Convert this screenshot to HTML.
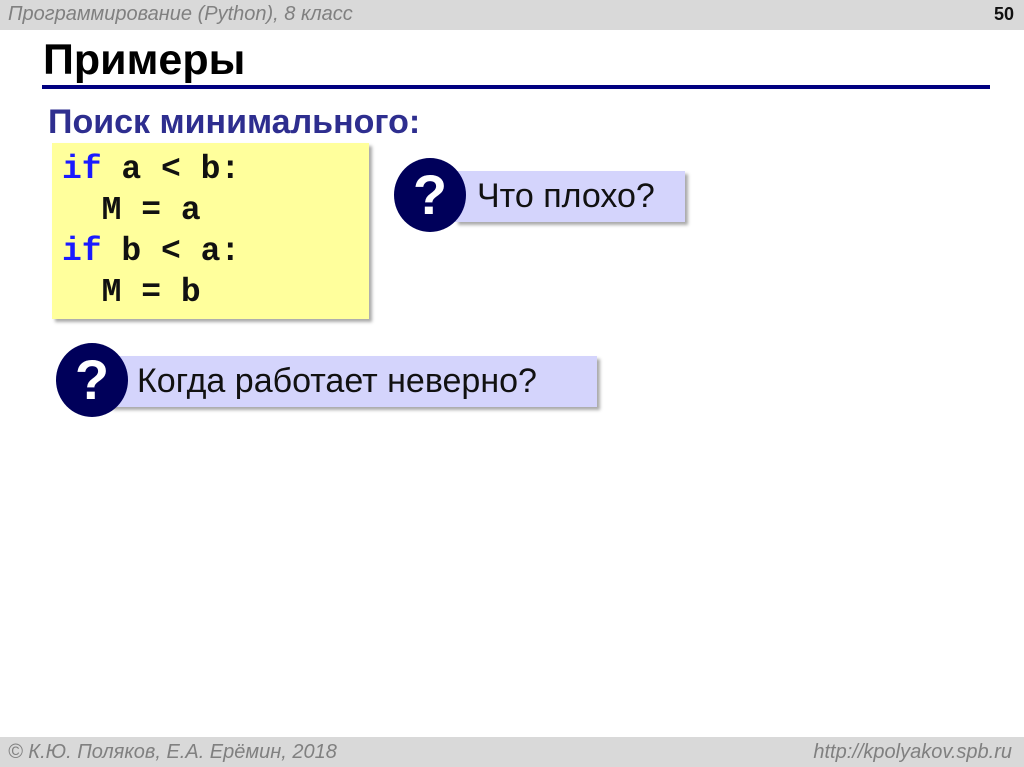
<!DOCTYPE html>
<html><head><meta charset="utf-8"><style>
body{margin:0;width:1024px;height:767px;position:relative;background:#fff;overflow:hidden;font-family:"Liberation Sans",sans-serif}
.a{position:absolute}
.hdr{left:0;top:0;width:1024px;height:30px;background:#d9d9d9}
.ftr{left:0;top:737px;width:1024px;height:30px;background:#d9d9d9}
.gi{color:#808080;font-style:italic;font-size:20px;white-space:nowrap}
.code{left:52px;top:143px;width:317px;height:176px;background:#ffff9c;box-shadow:3px 3px 3px #aaa}
.code div{font-family:"Liberation Mono",monospace;font-size:33px;font-weight:bold;height:41px;line-height:41px;color:#111;white-space:pre}
.kw{color:#1a1aff}
.box{background:#d4d4fc;box-shadow:3px 3px 3px #aaa;color:#111;line-height:51px;height:51px;white-space:nowrap}
.q{border-radius:50%;background:#00005a;width:72px;height:74px;color:#fff;font-weight:bold;font-size:56px;text-align:center;line-height:74px}
</style></head><body>
<div class="a hdr"></div>
<div class="a gi" style="left:8px;top:3px">Программирование (Python), 8 класс</div>
<div class="a" style="right:10px;top:4px;font-weight:bold;font-size:18px;color:#111">50</div>
<div class="a" style="left:43px;top:36px;font-size:43px;font-weight:bold;color:#000;white-space:nowrap">Примеры</div>
<div class="a" style="left:42px;top:85px;width:948px;height:4px;background:#000080"></div>
<div class="a" style="left:48px;top:103px;font-size:34px;font-weight:bold;color:#2e2e8f;white-space:nowrap">Поиск минимального:</div>
<div class="a code"><div style="padding:6px 0 0 10px"><div><span class="kw">if</span> a &lt; b:</div><div>  M = a</div><div><span class="kw">if</span> b &lt; a:</div><div>  M = b</div></div></div>
<div class="a box" style="left:455px;top:171px;width:230px;font-size:34px"><span style="margin-left:22px">Что плохо?</span></div>
<div class="a q" style="left:394px;top:158px">?</div>
<div class="a box" style="left:110px;top:356px;width:487px;font-size:34px"><span style="margin-left:27px">Когда работает неверно?</span></div>
<div class="a q" style="left:56px;top:343px">?</div>
<div class="a ftr"></div>
<div class="a gi" style="left:8px;top:741px">© К.Ю. Поляков, Е.А. Ерёмин, 2018</div>
<div class="a gi" style="right:12px;top:741px">http://kpolyakov.spb.ru</div>
</body></html>
